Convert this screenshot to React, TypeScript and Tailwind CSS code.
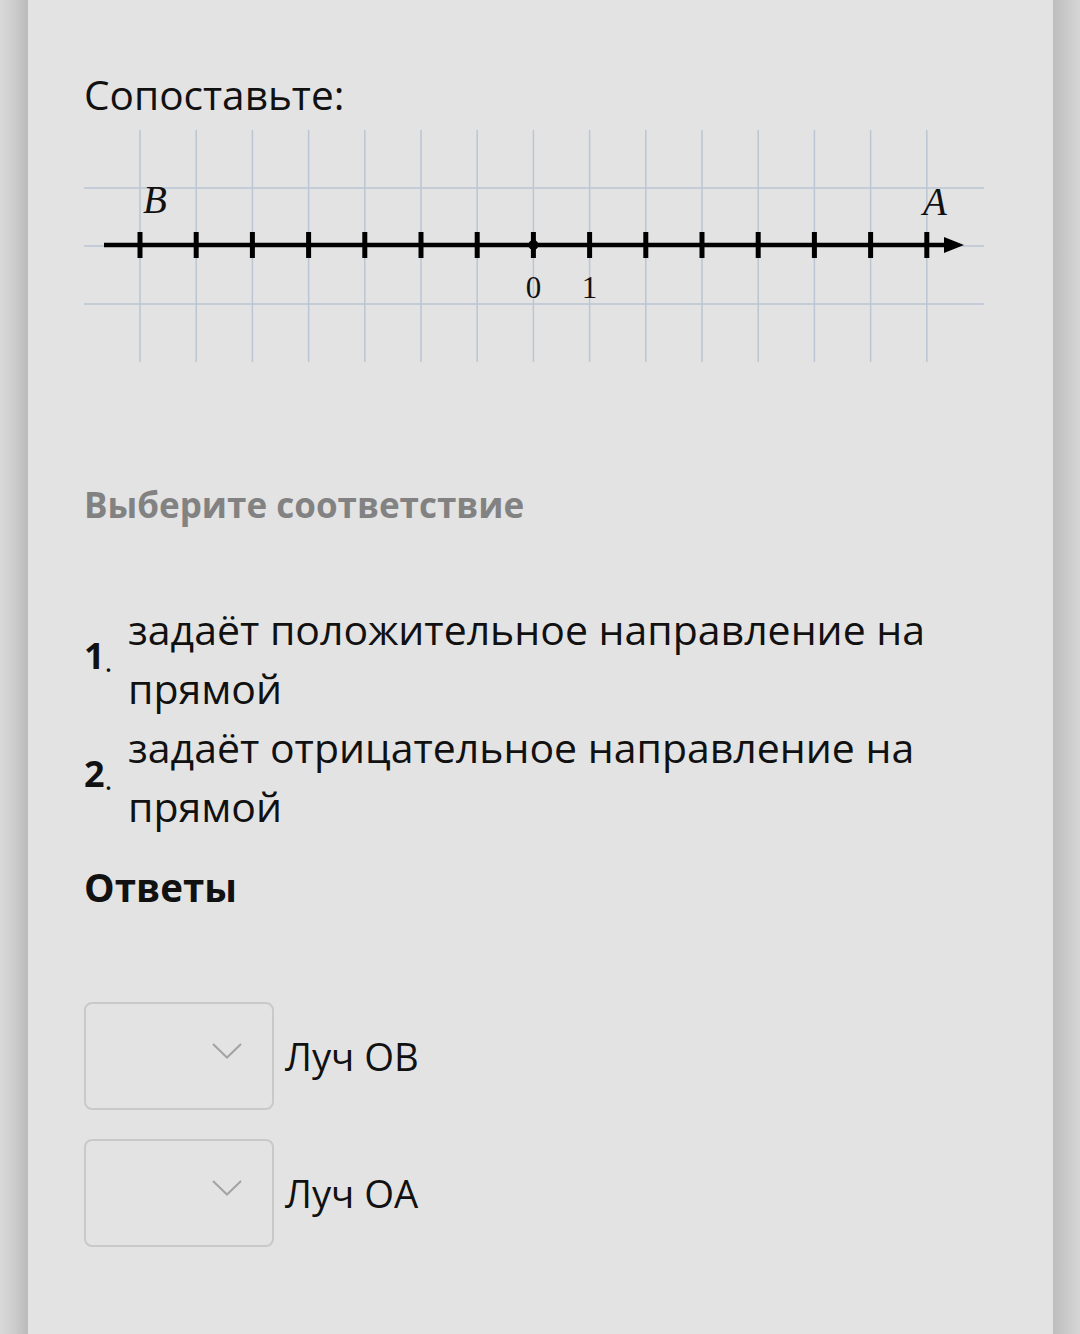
import React from "react"

const gridX = Array.from({ length: 15 }, (_, i) => 56 + i * 56.2)
const gridY = [60, 118, 176]

function NumberLine() {
    return (
        <svg width="900" height="236" viewBox="0 0 900 236" className="block">
            {/* grid */}
            {gridX.map((x) => (
                <line key={"v" + x} x1={x} y1={2} x2={x} y2={234} stroke="#bac6d3" strokeWidth="1.5" />
            ))}
            {gridY.map((y) => (
                <line key={"h" + y} x1={0} y1={y} x2={900} y2={y} stroke="#bac6d3" strokeWidth="1.5" />
            ))}

            {/* axis */}
            <line x1={20} y1={117} x2={866} y2={117} stroke="#000" strokeWidth="4.5" />
            <polygon points="860,109 880,117 860,125" fill="#000" />
            {gridX.map((x) => (
                <line key={"t" + x} x1={x} y1={104} x2={x} y2={130} stroke="#000" strokeWidth="5" />
            ))}
            <circle cx={gridX[7]} cy={117} r="5" fill="#000" />

            {/* labels */}
            <text x={71} y={85} textAnchor="middle" fontSize="39" fontStyle="italic" fontFamily="'Liberation Serif', serif" fill="#111">
                B
            </text>
            <text x={851} y={87} textAnchor="middle" fontSize="39" fontStyle="italic" fontFamily="'Liberation Serif', serif" fill="#111">
                A
            </text>
            <text x={gridX[7]} y={170} textAnchor="middle" fontSize="31" fontFamily="'Liberation Serif', serif" fill="#111">
                0
            </text>
            <text x={gridX[8]} y={170} textAnchor="middle" fontSize="31" fontFamily="'Liberation Serif', serif" fill="#111">
                1
            </text>
        </svg>
    )
}

function Chevron() {
    return (
        <svg width="30" height="16" viewBox="0 0 30 16" fill="none">
            <polyline points="1,1 15,14.5 29,1" stroke="#a3a3a3" strokeWidth="2" />
        </svg>
    )
}

const items = [
    { n: "1", text: "задаёт положительное направление на прямой" },
    { n: "2", text: "задаёт отрицательное направление на прямой" },
]

const answers = ["Луч OB", "Луч OA"]

export default function App() {
    return (
        <div className="flex min-h-[1334px] w-full bg-[#e3e3e3] font-['Open_Sans',sans-serif]">
            <div className="w-[28px] shrink-0 bg-linear-to-r from-[#d9d9d9] via-[#cdcdcd] to-[#bababa]" />

            <main className="flex-1 px-[56px] pt-[75px] text-[#111]">
                <h1 className="text-[40.6px] leading-[40px] font-normal">Сопоставьте:</h1>

                <div className="mt-[13px]">
                    <NumberLine />
                </div>

                <h2 className="mt-[123px] text-[35px] leading-[35px] font-bold text-[#828282]">
                    Выберите соответствие
                </h2>

                {/* statements */}
                <div className="mt-[78px] flex flex-col">
                    {items.map((item) => (
                        <div key={item.n} className="flex items-center">
                            <div className="mb-[6px] flex w-[44px] shrink-0 items-end">
                                <span className="text-[36px] leading-[36px] font-bold">{item.n}</span>
                                <span className="text-[30px] leading-[30px] translate-y-[2px]">.</span>
                            </div>
                            <p className="text-[41px] leading-[59px]">{item.text}</p>
                        </div>
                    ))}
                </div>

                <h2 className="mt-[32px] text-[38.5px] leading-[38px] font-bold">Ответы</h2>

                {/* answer selects */}
                <div className="mt-[96px] flex flex-col gap-[29px]">
                    {answers.map((a) => (
                        <div key={a} className="flex items-center gap-[11px]">
                            <div className="flex h-[108px] w-[190px] items-center justify-end rounded-[8px] border-2 border-[#c9c9c9] pr-[30px] pb-[10px]">
                                <Chevron />
                            </div>
                            <span className="text-[38.3px] leading-[38px]">{a}</span>
                        </div>
                    ))}
                </div>
            </main>

            <div className="w-[27px] shrink-0 bg-linear-to-r from-[#bdbdbd] via-[#cacaca] to-[#d6d6d6]" />
        </div>
    )
}
